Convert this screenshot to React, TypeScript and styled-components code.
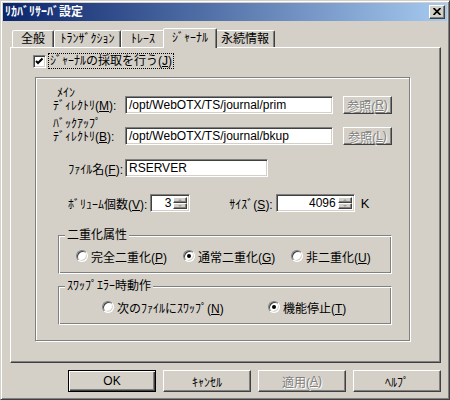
import React from 'react'
import styled, { createGlobalStyle, css } from 'styled-components'

const GlobalStyle = createGlobalStyle`
    body {
        margin: 0;
        font-family: "Liberation Sans", "Noto Sans CJK JP", sans-serif;
        font-size: 12px;
        color: #000;
    }
`

const raised = css`
    border: 1px solid;
    border-color: #fff #404040 #404040 #fff;
    box-shadow: inset -1px -1px 0 #808080;
`
const sunken = css`
    border: 1px solid;
    border-color: #808080 #fff #fff #808080;
    box-shadow: inset 1px 1px 0 #404040, inset -1px -1px 0 #d4d0c8;
`

type Tab = { label: string; width: number; active?: boolean }

const tabs: Array<Tab> = [
    { label: '全般', width: 42 },
    { label: 'ﾄﾗﾝｻﾞｸｼｮﾝ', width: 67 },
    { label: 'ﾄﾚｰｽ', width: 44 },
    { label: 'ｼﾞｬｰﾅﾙ', width: 50, active: true },
    { label: '永続情報', width: 60 },
]

const Spinner: React.FunctionComponent<{ value: string; width: number }> = ({ value, width }) => (
    <SpinField $w={width}>
        <SpinValue>{value}</SpinValue>
        <SpinButtons>
            <SpinButton>
                <SpinArrow />
            </SpinButton>
            <SpinButton>
                <SpinArrow $down />
            </SpinButton>
        </SpinButtons>
    </SpinField>
)

const Radio: React.FunctionComponent<{ checked?: boolean; width: number; children: React.ReactNode }> = ({
    checked,
    width,
    children,
}) => (
    <RadioItem $w={width}>
        <RadioCircle>{checked && <RadioDot />}</RadioCircle>
        <span>{children}</span>
    </RadioItem>
)

const GroupBox: React.FunctionComponent<{ title: string; children: React.ReactNode; indent: number }> = ({
    title,
    children,
    indent,
}) => (
    <Group>
        <GroupHead>
            <GroupCap />
            <GroupTitle>{title}</GroupTitle>
            <GroupRule />
        </GroupHead>
        <GroupBody $indent={indent}>{children}</GroupBody>
    </Group>
)

export default function App() {
    return (
        <>
            <GlobalStyle />
            <Window>
                <TitleBar>
                    <TitleText>ﾘｶﾊﾞﾘｻｰﾊﾞ設定</TitleText>
                    <CloseButton>
                        <svg width="8" height="7" viewBox="0 0 8 7">
                            <path d="M0.5 0 L7.5 7 M7.5 0 L0.5 7" stroke="#000" strokeWidth="1.7" />
                        </svg>
                    </CloseButton>
                </TitleBar>
                <Body>
                    <TabStrip>
                        {tabs.map(tab => (
                            <TabItem key={tab.label} $w={tab.width} $active={tab.active}>
                                {tab.label}
                            </TabItem>
                        ))}
                    </TabStrip>
                    <Panel>
                        <CheckRow>
                            <CheckBox>
                                <svg width="9" height="9" viewBox="0 0 9 9">
                                    <path d="M1 4 L3 6 L7.5 1.5" fill="none" stroke="#000" strokeWidth="2" />
                                </svg>
                            </CheckBox>
                            <FocusLabel>
                                ｼﾞｬｰﾅﾙの採取を行う(<u>J</u>)
                            </FocusLabel>
                        </CheckRow>
                        <Frame>
                            <DirRow>
                                <DirLabel>
                                    <LabelLine $indent={4}>ﾒｲﾝ</LabelLine>
                                    <LabelLine>
                                        ﾃﾞｨﾚｸﾄﾘ(<u>M</u>):
                                    </LabelLine>
                                </DirLabel>
                                <TextField $w={208}>/opt/WebOTX/TS/journal/prim</TextField>
                                <BrowseButton>
                                    参照(<u>R</u>)
                                </BrowseButton>
                            </DirRow>
                            <DirRow $gap={4}>
                                <DirLabel>
                                    <LabelLine>ﾊﾞｯｸｱｯﾌﾟ</LabelLine>
                                    <LabelLine>
                                        ﾃﾞｨﾚｸﾄﾘ(<u>B</u>):
                                    </LabelLine>
                                </DirLabel>
                                <TextField $w={208}>/opt/WebOTX/TS/journal/bkup</TextField>
                                <BrowseButton>
                                    参照(<u>L</u>)
                                </BrowseButton>
                            </DirRow>
                            <FileRow>
                                <FileLabel>
                                    ﾌｧｲﾙ名(<u>F</u>):
                                </FileLabel>
                                <TextField $w={143}>RSERVER</TextField>
                            </FileRow>
                            <VolumeRow>
                                <span>
                                    ﾎﾞﾘｭｰﾑ個数(<u>V</u>):
                                </span>
                                <Spinner value="3" width={40} />
                                <SizeLabel>
                                    ｻｲｽﾞ(<u>S</u>):
                                </SizeLabel>
                                <Spinner value="4096" width={79} />
                                <Unit>K</Unit>
                            </VolumeRow>
                            <GroupSlot $top={17}>
                                <GroupBox title="二重化属性" indent={17}>
                                    <Radio width={107}>
                                        完全二重化(<u>P</u>)
                                    </Radio>
                                    <Radio width={108} checked>
                                        通常二重化(<u>G</u>)
                                    </Radio>
                                    <Radio width={90}>
                                        非二重化(<u>U</u>)
                                    </Radio>
                                </GroupBox>
                            </GroupSlot>
                            <GroupSlot $top={6}>
                                <GroupBox title="ｽﾜｯﾌﾟｴﾗｰ時動作" indent={43}>
                                    <Radio width={166}>
                                        次のﾌｧｲﾙにｽﾜｯﾌﾟ(<u>N</u>)
                                    </Radio>
                                    <Radio width={90} checked>
                                        機能停止(<u>T</u>)
                                    </Radio>
                                </GroupBox>
                            </GroupSlot>
                        </Frame>
                    </Panel>
                    <ButtonRow>
                        <DialogButton $default>OK</DialogButton>
                        <DialogButton>ｷｬﾝｾﾙ</DialogButton>
                        <DialogButton $disabled>
                            適用(<u>A</u>)
                        </DialogButton>
                        <DialogButton>ﾍﾙﾌﾟ</DialogButton>
                    </ButtonRow>
                </Body>
            </Window>
        </>
    )
}

const Window = styled.div`
    box-sizing: border-box;
    width: 450px;
    height: 400px;
    padding: 2px;
    background: #d4d0c8;
    border: 1px solid;
    border-color: #d4d0c8 #404040 #404040 #d4d0c8;
    box-shadow: inset 1px 1px 0 #fff, inset -1px -1px 0 #808080;
    display: flex;
    flex-direction: column;
`
const TitleBar = styled.div`
    height: 18px;
    display: flex;
    align-items: center;
    justify-content: space-between;
    padding: 0 2px 0 2px;
    background: linear-gradient(to right, #0a246a, #a6caf0);
`
const TitleText = styled.span`
    color: #fff;
    font-weight: bold;
    font-size: 12px;
    line-height: 14px;
`
const CloseButton = styled.div`
    box-sizing: border-box;
    width: 16px;
    height: 14px;
    background: #d4d0c8;
    ${raised};
    display: flex;
    align-items: center;
    justify-content: center;
    padding-bottom: 1px;
`
const Body = styled.div`
    display: flex;
    flex-direction: column;
    padding: 7px 6px 0 7px;
`
const TabStrip = styled.div`
    display: flex;
    align-items: flex-end;
    padding-left: 2px;
`
const TabItem = styled.div<{ $w: number; $active?: boolean }>`
    box-sizing: border-box;
    position: relative;
    width: ${({ $w, $active }) => ($active ? $w + 4 : $w)}px;
    height: ${({ $active }) => ($active ? 20 : 17)}px;
    margin: ${({ $active }) => ($active ? '0 -2px -1px' : '0')};
    z-index: ${({ $active }) => ($active ? 1 : 0)};
    background: #d4d0c8;
    border: 1px solid;
    border-bottom: none;
    border-color: #fff #404040 transparent #fff;
    border-radius: 2px 2px 0 0;
    box-shadow: inset -1px 0 0 #808080;
    display: flex;
    justify-content: center;
    padding-top: ${({ $active }) => ($active ? 3 : 2)}px;
    line-height: 12px;
    white-space: nowrap;
`
const Panel = styled.div`
    box-sizing: border-box;
    height: 316px;
    border: 1px solid;
    border-color: #fff #404040 #404040 #fff;
    box-shadow: inset -1px -1px 0 #808080;
    padding: 5px 0 0 22px;
    display: flex;
    flex-direction: column;
`
const CheckRow = styled.div`
    display: flex;
    align-items: center;
    height: 16px;
`
const CheckBox = styled.div`
    box-sizing: border-box;
    width: 13px;
    height: 13px;
    background: #fff;
    ${sunken};
    display: flex;
    align-items: center;
    justify-content: center;
`
const FocusLabel = styled.span`
    margin-left: 3px;
    padding: 0 1px;
    line-height: 14px;
    outline: 1px dotted #000;
`
const Frame = styled.div`
    box-sizing: border-box;
    width: 375px;
    height: 264px;
    margin: 8px 0 0 2px;
    border: 1px solid #808080;
    box-shadow: inset 1px 1px 0 #fff, 1px 1px 0 #fff;
    padding: 9px 0 0 17px;
    display: flex;
    flex-direction: column;
`
const DirRow = styled.div<{ $gap?: number }>`
    display: flex;
    align-items: flex-end;
    height: 27px;
    margin-top: ${({ $gap }) => $gap || 0}px;
`
const DirLabel = styled.div`
    width: 72px;
    align-self: flex-start;
    display: flex;
    flex-direction: column;
`
const LabelLine = styled.span<{ $indent?: number }>`
    height: 13px;
    line-height: 13px;
    padding-left: ${({ $indent }) => $indent || 0}px;
    white-space: nowrap;
`
const TextField = styled.div<{ $w: number }>`
    box-sizing: border-box;
    width: ${({ $w }) => $w}px;
    height: 18px;
    background: #fff;
    ${sunken};
    padding: 0 3px;
    line-height: 16px;
    white-space: nowrap;
    overflow: hidden;
`
const BrowseButton = styled.div`
    box-sizing: border-box;
    width: 49px;
    height: 18px;
    margin-left: 10px;
    ${raised};
    display: flex;
    align-items: center;
    justify-content: center;
    color: #808080;
    text-shadow: 1px 1px 0 #fff;
`
const FileRow = styled.div`
    display: flex;
    align-items: center;
    margin-top: 14px;
`
const FileLabel = styled.span`
    width: 72px;
    box-sizing: border-box;
    text-align: right;
    padding-right: 2px;
    white-space: nowrap;
`
const VolumeRow = styled.div`
    display: flex;
    align-items: center;
    margin-top: 17px;
    padding-left: 15px;
    gap: 3px;
    white-space: nowrap;
`
const SizeLabel = styled.span`
    margin-left: 36px;
`
const Unit = styled.span`
    margin-left: 3px;
    font-size: 13px;
`
const SpinField = styled.div<{ $w: number }>`
    box-sizing: border-box;
    width: ${({ $w }) => $w}px;
    height: 18px;
    background: #fff;
    ${sunken};
    padding: 2px 2px 2px 2px;
    display: flex;
`
const SpinValue = styled.span`
    flex: 1;
    text-align: right;
    padding-right: 2px;
    line-height: 13px;
`
const SpinButtons = styled.div`
    width: 14px;
    display: flex;
    flex-direction: column;
`
const SpinButton = styled.div`
    box-sizing: border-box;
    flex: 1;
    background: #d4d0c8;
    ${raised};
    display: flex;
    align-items: center;
    justify-content: center;
`
const SpinArrow = styled.div<{ $down?: boolean }>`
    width: 0;
    height: 0;
    border-left: 2px solid transparent;
    border-right: 2px solid transparent;
    ${({ $down }) => ($down ? 'border-top: 2px solid #a0a0a0;' : 'border-bottom: 2px solid #a0a0a0;')}
`
const GroupSlot = styled.div<{ $top: number }>`
    margin: ${({ $top }) => $top}px 0 0 5px;
    width: 334px;
`
const Group = styled.div`
    display: flex;
    flex-direction: column;
`
const GroupHead = styled.div`
    display: flex;
    height: 12px;
`
const GroupCap = styled.div`
    width: 6px;
    margin-top: 6px;
    border-top: 1px solid #808080;
    border-left: 1px solid #808080;
    box-shadow: inset 1px 1px 0 #fff;
`
const GroupTitle = styled.span`
    padding: 0 2px;
    line-height: 12px;
    white-space: nowrap;
`
const GroupRule = styled.div`
    flex: 1;
    margin-top: 6px;
    border-top: 1px solid #808080;
    border-right: 1px solid #fff;
    box-shadow: inset 0 1px 0 #fff, inset -1px 0 0 #808080;
`
const GroupBody = styled.div<{ $indent: number }>`
    box-sizing: border-box;
    height: 33px;
    border-left: 1px solid #808080;
    border-right: 1px solid #fff;
    border-bottom: 1px solid #fff;
    box-shadow: inset 1px 0 0 #fff, inset -1px 0 0 #808080, inset 0 -1px 0 #808080;
    padding: 9px 0 0 ${({ $indent }) => $indent}px;
    display: flex;
    align-items: flex-start;
`
const RadioItem = styled.div<{ $w: number }>`
    width: ${({ $w }) => $w}px;
    display: flex;
    align-items: center;
    gap: 3px;
    height: 12px;
    white-space: nowrap;
`
const RadioCircle = styled.div`
    box-sizing: border-box;
    width: 12px;
    height: 12px;
    flex-shrink: 0;
    border-radius: 50%;
    background: #fff;
    border: 1px solid;
    border-color: #808080 #fff #fff #808080;
    box-shadow: inset 1px 1px 0 #404040, inset -1px -1px 0 #d4d0c8;
    display: flex;
    align-items: center;
    justify-content: center;
`
const RadioDot = styled.div`
    width: 4px;
    height: 4px;
    border-radius: 50%;
    background: #000;
`
const ButtonRow = styled.div`
    display: flex;
    justify-content: flex-end;
    gap: 7px;
    margin-top: 7px;
`
const DialogButton = styled.div<{ $default?: boolean; $disabled?: boolean }>`
    box-sizing: border-box;
    width: 88px;
    height: 22px;
    display: flex;
    align-items: center;
    justify-content: center;
    ${({ $default }) =>
        $default
            ? css`
                  border: 1px solid #000;
                  box-shadow: inset 1px 1px 0 #fff, inset -1px -1px 0 #404040, inset -2px -2px 0 #808080;
              `
            : raised}
    ${({ $disabled }) =>
        $disabled &&
        css`
            color: #808080;
            text-shadow: 1px 1px 0 #fff;
        `}
`
